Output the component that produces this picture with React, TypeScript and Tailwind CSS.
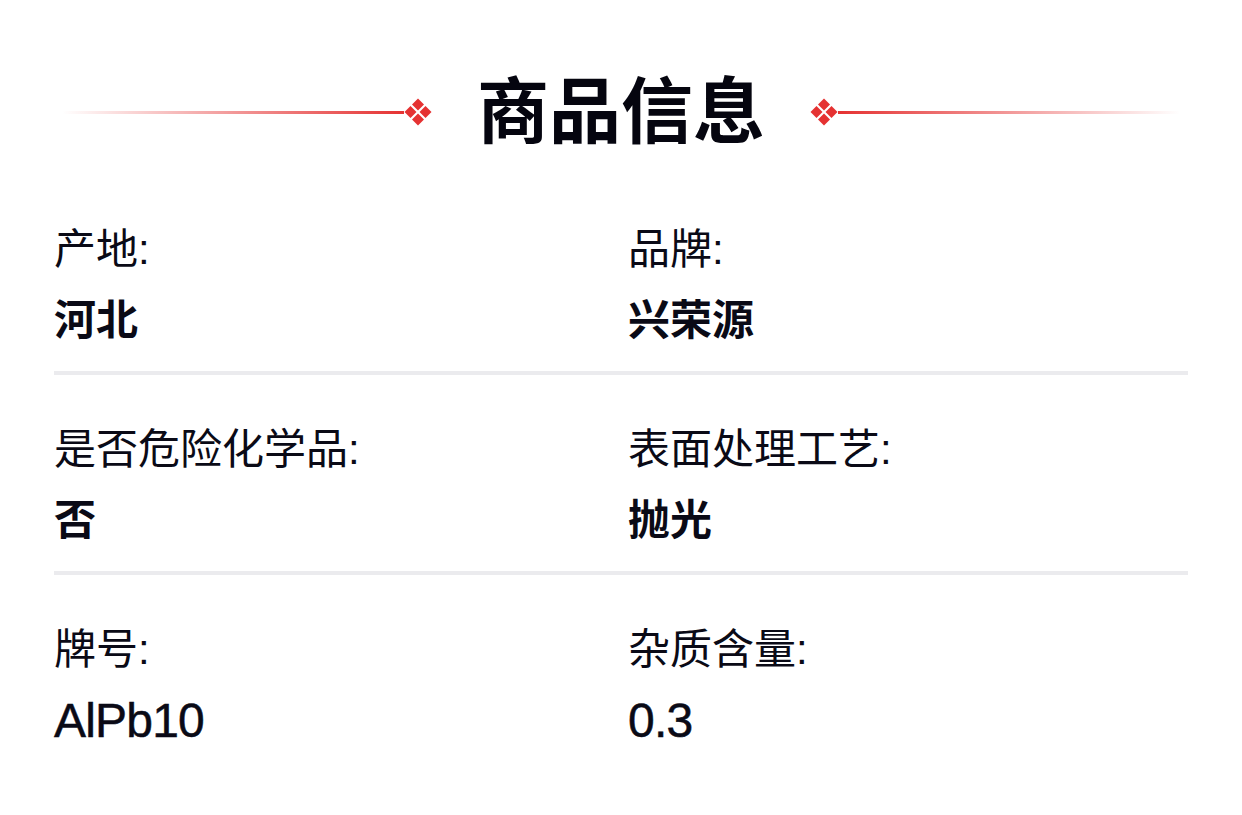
import React from "react";

// --- Data ---

interface Attr {
  label: string;
  value: string;
}

const rows: [Attr, Attr][] = [
  [
    { label: "产地:", value: "河北" },
    { label: "品牌:", value: "兴荣源" },
  ],
  [
    { label: "是否危险化学品:", value: "否" },
    { label: "表面处理工艺:", value: "抛光" },
  ],
  [
    { label: "牌号:", value: "AlPb10" },
    { label: "杂质含量:", value: "0.3" },
  ],
];

const isLatin = (s: string) => /^[\x00-\x7F]+$/.test(s);

// --- Ornament ---

function Diamond() {
  return (
    <svg width="28" height="28" viewBox="-14 -14 28 28" className="shrink-0">
      <g fill="#e53232">
        <polygon points="-13.5,0 -7.5,-6 -1.5,0 -7.5,6" />
        <polygon points="1.5,0 7.5,-6 13.5,0 7.5,6" />
        <polygon points="0,-13.5 6,-7.5 0,-1.5 -6,-7.5" />
        <polygon points="0,1.5 6,7.5 0,13.5 -6,7.5" />
      </g>
    </svg>
  );
}

function Header() {
  return (
    <div className="flex items-center px-[62px] pt-[76px]">
      <div className="h-[3px] flex-1 bg-gradient-to-r from-[#e53232]/0 to-[#e53232]" />
      <Diamond />
      <h1 className="mx-[45px] text-[72px] font-bold leading-[72px] text-[#05050f]">
        商品信息
      </h1>
      <Diamond />
      <div className="h-[3px] flex-1 bg-gradient-to-l from-[#e53232]/0 to-[#e53232]" />
    </div>
  );
}

// --- Rows ---

function Cell({ label, value }: Attr) {
  return (
    <div className="flex flex-col gap-[21px]">
      <div className="text-[42px] leading-[50px]">{label}</div>
      {isLatin(value) ? (
        <div className="text-[48px] leading-[50px] tracking-[-0.8px] [-webkit-text-stroke:0.5px_#0a0a16]">
          {value}
        </div>
      ) : (
        <div className="text-[42px] font-bold leading-[50px]">{value}</div>
      )}
    </div>
  );
}

export default function App() {
  return (
    <div
      className="min-h-[815px] w-[1242px] bg-white text-[#0a0a16]"
      style={{ fontFamily: '"Liberation Sans", "Noto Sans CJK SC", sans-serif' }}
    >
      <Header />
      <div className="px-[54px] pt-[77px]">
        {rows.map((pair, i) => (
          <div
            key={i}
            className={
              i < rows.length - 1
                ? "grid grid-cols-2 gap-x-[14px] border-b-4 border-[#ebebee] pb-[25px] mb-[50px]"
                : "grid grid-cols-2 gap-x-[14px]"
            }
          >
            <Cell {...pair[0]} />
            <Cell {...pair[1]} />
          </div>
        ))}
      </div>
    </div>
  );
}
